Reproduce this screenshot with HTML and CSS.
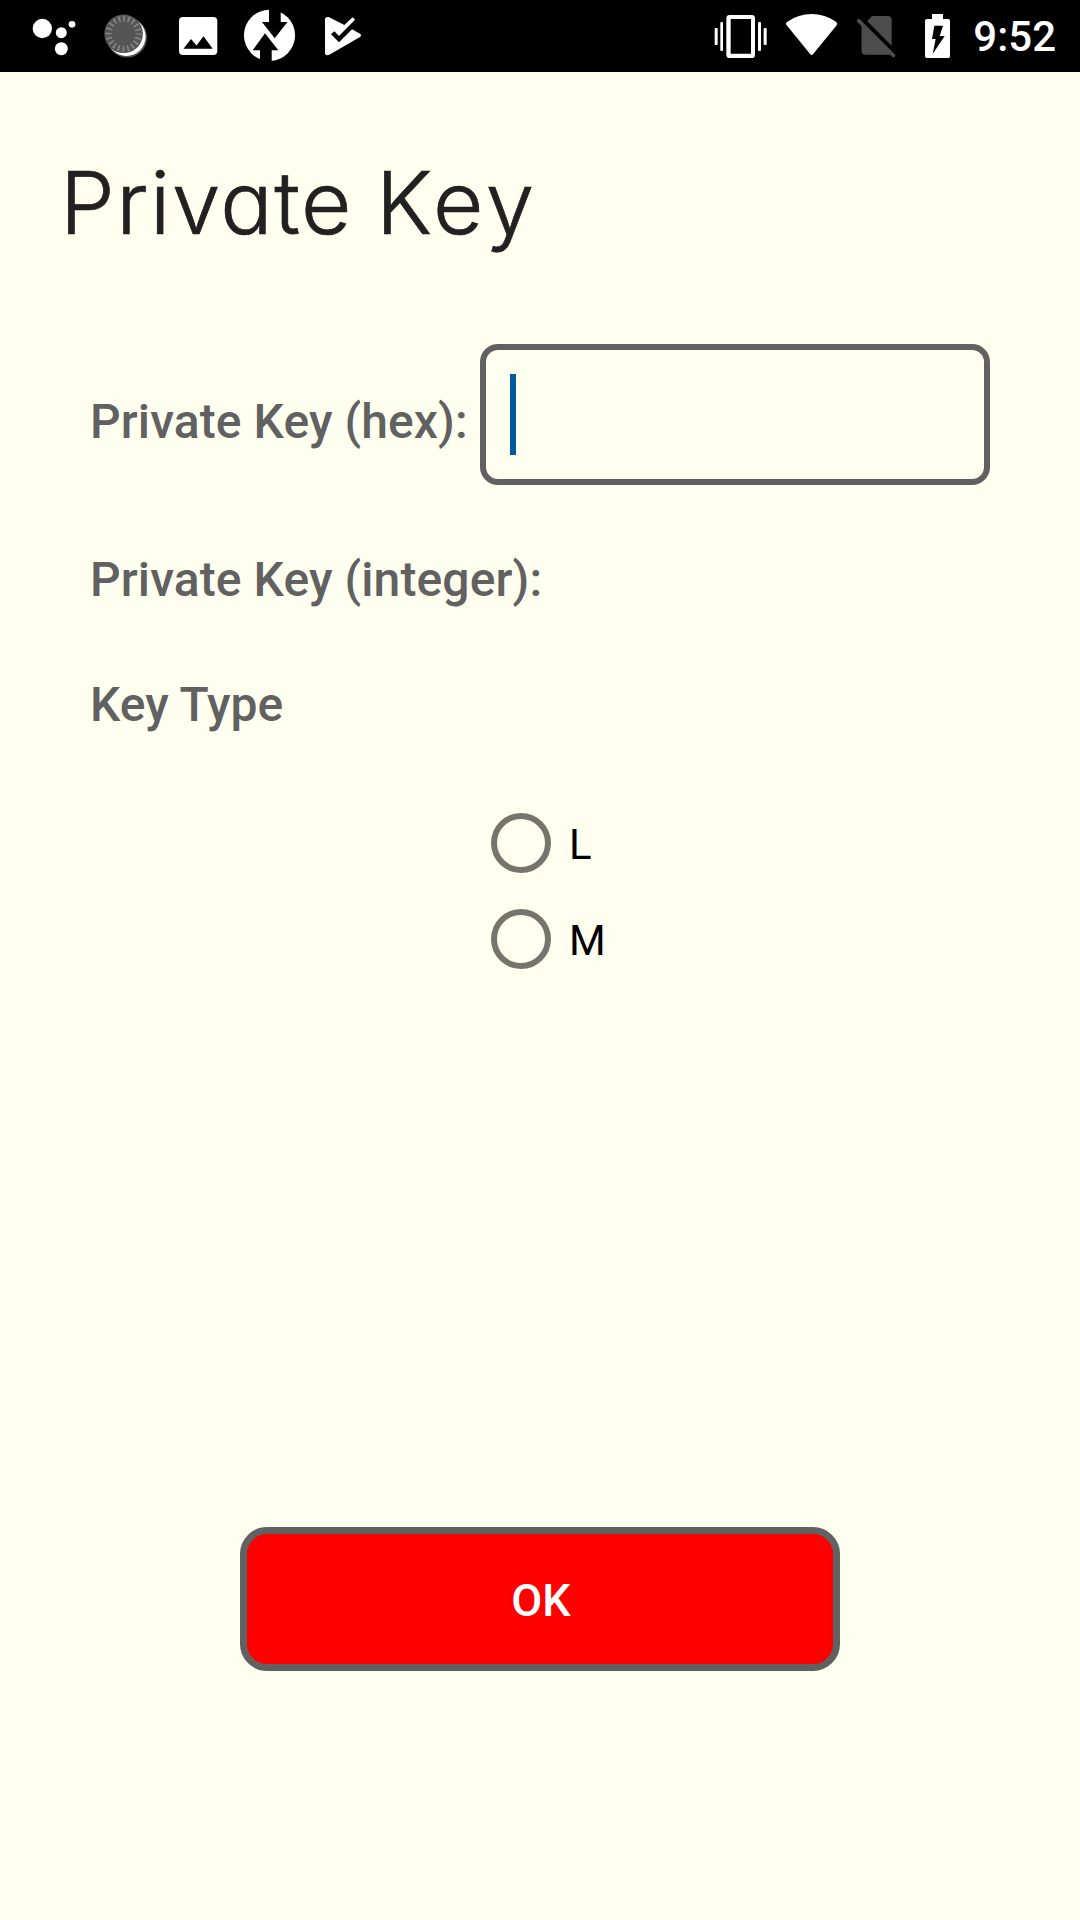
FILE: index.html
```html
<!DOCTYPE html>
<html lang="en">
<head>
<meta charset="utf-8">
<title>Private Key</title>
<link rel="stylesheet" href="styles.css">
</head>
<body>
<header class="status-bar">
  <div class="status-group">
    <svg class="icon" width="62" height="72" viewBox="60 0 186 216" fill="#fff"><circle cx="127" cy="85.500" r="29"/><circle cx="184" cy="98" r="16.500"/><circle cx="216" cy="73" r="10"/><circle cx="184" cy="146" r="19.500"/></svg>
    <svg class="icon" width="70" height="72" viewBox="82 0 70 72">
      <circle cx="127" cy="37.500" r="20" fill="#555"/>
      <circle cx="126.400" cy="36.700" r="19.200" fill="#fff"/>
      <circle cx="123.600" cy="33.800" r="19.300" fill="#555"/>
      <circle cx="123.600" cy="33.800" r="15" fill="none" stroke="#858585" stroke-width="6" stroke-dasharray="1.700 3.012" stroke-dashoffset=".85"/>
    </svg>
    <svg class="icon" width="80" height="72" viewBox="152 0 80 72"><rect x="179" y="17" width="38.300" height="38" rx="4" fill="#fff"/><path d="M183.500 48.800 191 39l5.500 6.500 7-9.200 9.200 12.500z"/></svg>
    <svg class="icon" width="80" height="72" viewBox="232 0 80 72"><circle cx="269.500" cy="35.300" r="25.600" fill="#fff"/><path d="M269 9v13h-7l12.700 16.300L287.500 22h-6.800V9zM265 33.300 252.700 50.300h7.300V62h11.700V50.300h6.600z"/></svg>
    <svg class="icon" width="60" height="72" viewBox="336 0 180 216"><path fill="#fff" d="M375 56q1-6 11-5l47 24 23-22q4-2 9 6l-48 49-14-14-10 9 24 24 39-39 24 13q6 5 0 10l-92 53q-11 4-13-3z"/></svg>
  </div>
  <div class="status-group">
    <svg class="icon" width="62" height="72" viewBox="30 0 186 216" fill="#fff"><path fill-rule="evenodd" d="M89 45h66q10 0 10 10v109q0 10-10 10H89q-10 0-10-10V55q0-10 10-10zm3 12v104h61V57z"/><rect x="61" y="66" width="8" height="87" rx="3"/><rect x="44" y="84" width="9" height="51" rx="3"/><rect x="174" y="66" width="9" height="87" rx="3"/><rect x="191" y="84" width="9" height="51" rx="3"/></svg>
    <svg class="icon" width="72" height="72" viewBox="216 0 216 216" fill="#fff"><path d="M260 76q-5-6 2-11Q295 42 335 42t73 23q6 5 2 11l-71 87q-4 5-8 0z"/></svg>
    <svg class="icon" width="66" height="72" viewBox="844 0 66 72"><path fill="#4d4d4d" d="m872 16-4.700 5.300L891.700 45.700V20q0-4-4-4zM861.500 23.500v27.200q0 4 4 4h26z"/><path d="m858.700 20.700 34.800 34.800" stroke="#4d4d4d" stroke-width="3.700" stroke-linecap="round"/></svg>
    <svg class="icon" width="60" height="72" viewBox="60 0 180 216"><path fill="#fff" d="M126 42h33v15h16q5 0 5 5v107q0 5-5 5h-65q-5 0-5-5V62q0-5 5-5h16z"/><path d="M133 77h26l-10 31h15l-36 54 9-45h-11z"/></svg>
    <span class="clock">9:52</span>
  </div>
</header>
<main class="screen">
  <h1 class="title">Private <span class="title-end">Key</span></h1>
  <form class="form">
    <div class="field-row">
      <span class="label">Private Key (hex):</span>
      <div class="text-field"><span class="caret"></span></div>
    </div>
    <div class="label label-integer">Private Key (integer):</div>
    <div class="label label-type">Key Type</div>
    <div class="options">
      <div class="option"><span class="radio"></span><span class="option-text">L</span></div>
      <div class="option"><span class="radio"></span><span class="option-text">M</span></div>
    </div>
    <button class="ok-button" type="button">OK</button>
  </form>
</main>
</body>
</html>
```
FILE: styles.css
```css
* { box-sizing: border-box; }

body {
  margin: 0;
  min-height: 1920px;
  background: #fffff0;
  color: #616161;
  font-family: Roboto, sans-serif;
}

.status-bar {
  display: flex;
  justify-content: space-between;
  height: 72px;
  padding: 0 24px 0 20px;
  background: #000;
}

.status-group { display: flex; }

.icon { display: block; flex: none; }

.clock {
  margin-left: 3px;
  color: #fff;
  font-size: 42px;
  font-weight: 500;
  line-height: 74px;
}

.title {
  margin: 0;
  padding: 76px 0 0 60px;
  color: #212121;
  font-family: Inter, sans-serif;
  font-size: 87px;
  font-weight: 300;
  font-feature-settings: "cv11";
  letter-spacing: 1.6px;
  word-spacing: -3px;
  line-height: 110px;
  white-space: nowrap;
  -webkit-text-stroke: 0.7px #212121;
}

.title-end { letter-spacing: 4px; }

.form {
  display: flex;
  flex-direction: column;
  padding: 86px 90px 0;
}

.field-row { display: flex; justify-content: space-between; }

.label {
  font-size: 48px;
  font-weight: 500;
  letter-spacing: 0.1px;
  line-height: 56px;
  white-space: nowrap;
}

.label-type.label { letter-spacing: 0; }

.field-row .label { padding-top: 50px; }

.text-field {
  width: 510px;
  height: 141px;
  padding: 24px;
  border: 6px solid #616161;
  border-radius: 18px;
}

.caret {
  display: block;
  width: 6px;
  height: 81px;
  background: #005a9c;
}

.label-integer { margin-top: 67px; }
.label-type { margin-top: 69px; }

.options { margin: 62px 0 0 401px; }

.option {
  display: flex;
  align-items: center;
  gap: 18px;
  height: 96px;
  color: #000;
  font-size: 42px;
}

.option-text { padding-top: 2px; }

.radio {
  width: 60px;
  height: 60px;
  border: 6px solid #75756e;
  border-radius: 50%;
}

.ok-button {
  align-self: center;
  width: 600px;
  height: 144px;
  margin-top: 540px;
  padding: 3px 0 0 2px;
  border: 7px solid #616161;
  border-radius: 27px;
  background: #f00;
  color: #fff;
  font: 500 45px/52px Roboto, sans-serif;
}
```
